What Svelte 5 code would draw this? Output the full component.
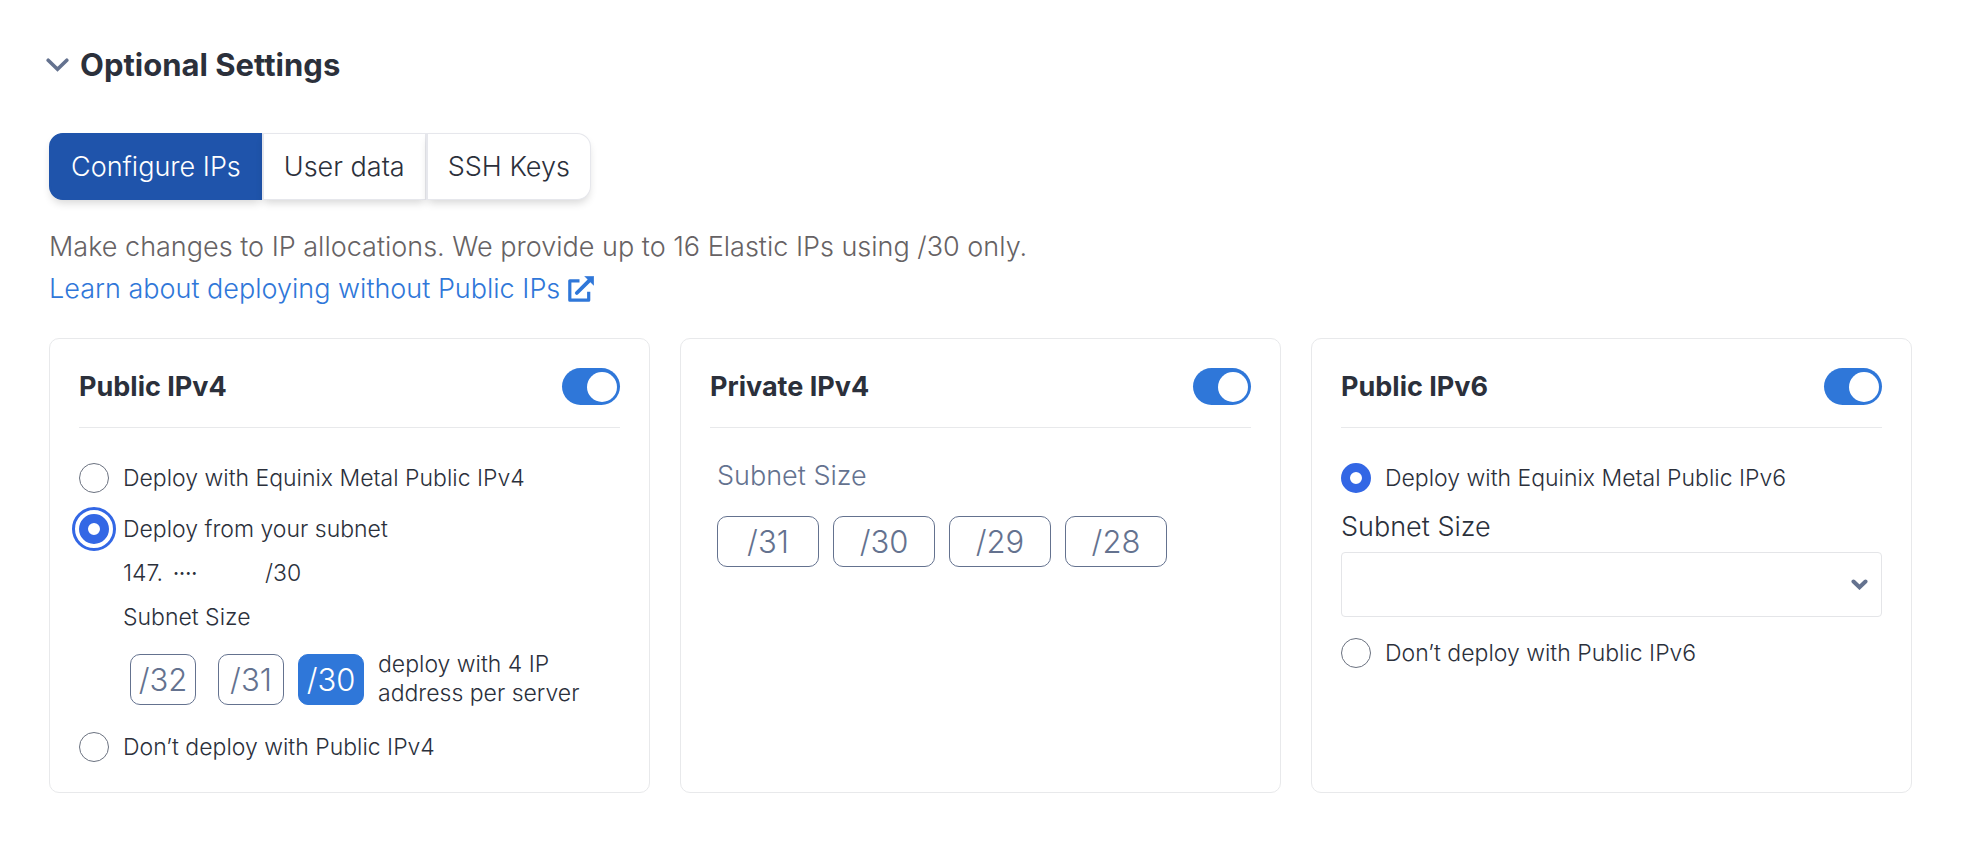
<script>
  const tabs = ['Configure IPs', 'User data', 'SSH Keys'];
  const v4Sizes = ['/32', '/31', '/30'];
  const privateSizes = ['/31', '/30', '/29', '/28'];

  let activeTab = $state('Configure IPs');
  let v4Mode = $state('subnet');
  let v6Mode = $state('deploy');
  let v4Size = $state('/30');
  let privateSize = $state('');
  let v4On = $state(true);
  let privateOn = $state(true);
  let v6On = $state(true);
</script>

<main>
  <h2>
    <button class="heading" aria-expanded="true">
      <svg width="23" height="14" viewBox="0 0 23 14" aria-hidden="true">
        <path d="M2.2 2.2 11.5 11.3 20.8 2.2" fill="none" stroke="#64728f" stroke-width="3.6" stroke-linecap="round" />
      </svg>
      Optional Settings
    </button>
  </h2>

  <div class="tabs" role="tablist">
    {#each tabs as tab}
      <button role="tab" class="tab" class:active={tab === activeTab} aria-selected={tab === activeTab} onclick={() => (activeTab = tab)}>{tab}</button>
    {/each}
  </div>

  <p class="intro">Make changes to IP allocations. We provide up to 16 Elastic IPs using /30 only.</p>
  <a class="learn" href="#docs">
    Learn about deploying without Public IPs
    <svg width="26" height="26" viewBox="0 0 26 26" aria-hidden="true">
      <path d="M11.5 4.8H1.8V24.2H20.7V15.8" fill="none" stroke="currentColor" stroke-width="3.2" stroke-linejoin="round" />
      <path d="M8.8 17 21 4.8" fill="none" stroke="currentColor" stroke-width="3.8" stroke-linecap="round" />
      <path d="M16.6 .2H25.8V9.4Z" fill="currentColor" stroke="currentColor" stroke-width=".4" />
    </svg>
  </a>

  <div class="cards">
    <section class="card">
      <header>
        <h3 id="t-v4">Public IPv4</h3>
        <input class="toggle" type="checkbox" role="switch" aria-labelledby="t-v4" bind:checked={v4On} />
      </header>
      <div class="body">
        <label class="option"><input type="radio" name="v4" value="equinix" bind:group={v4Mode} />Deploy with Equinix Metal Public IPv4</label>
        <label class="option next"><input class="ring" type="radio" name="v4" value="subnet" bind:group={v4Mode} />Deploy from your subnet</label>
        <div class="details">
          <div class="line address"><span>147.</span><span class="dots">····</span><span>/30</span></div>
          <div class="line">Subnet Size</div>
          <div class="sizes">
            {#each v4Sizes as size}
              <button class="size" class:selected={size === v4Size} aria-pressed={size === v4Size} onclick={() => (v4Size = size)}>{size}</button>
            {/each}
            <span class="note">deploy with 4 IP<br />address per server</span>
          </div>
        </div>
        <label class="option last"><input type="radio" name="v4" value="none" bind:group={v4Mode} />Don’t deploy with Public IPv4</label>
      </div>
    </section>

    <section class="card">
      <header>
        <h3 id="t-private">Private IPv4</h3>
        <input class="toggle" type="checkbox" role="switch" aria-labelledby="t-private" bind:checked={privateOn} />
      </header>
      <div class="body private">
        <div class="caption">Subnet Size</div>
        <div class="sizes">
          {#each privateSizes as size}
            <button class="size wide" class:selected={size === privateSize} aria-pressed={size === privateSize} onclick={() => (privateSize = size)}>{size}</button>
          {/each}
        </div>
      </div>
    </section>

    <section class="card">
      <header>
        <h3 id="t-v6">Public IPv6</h3>
        <input class="toggle" type="checkbox" role="switch" aria-labelledby="t-v6" bind:checked={v6On} />
      </header>
      <div class="body">
        <label class="option"><input type="radio" name="v6" value="deploy" bind:group={v6Mode} />Deploy with Equinix Metal Public IPv6</label>
        <label class="caption dark" for="v6-size">Subnet Size</label>
        <div class="select">
          <select id="v6-size"><option value=""></option></select>
          <svg width="17" height="11" viewBox="0 0 17 11" aria-hidden="true">
            <path d="M2.5 2.5 8.5 8.3 14.5 2.5" fill="none" stroke="#64728f" stroke-width="4" stroke-linecap="round" />
          </svg>
        </div>
        <label class="option next"><input type="radio" name="v6" value="none" bind:group={v6Mode} />Don’t deploy with Public IPv6</label>
      </div>
    </section>
  </div>
</main>

<style>
  :global(body) {
    margin: 0;
    background: #fff;
  }

  main {
    padding: 45px 54px 53px 49px;
    font-family: Inter, 'Liberation Sans', sans-serif;
    font-weight: 300;
    font-size: 23px;
    color: #2b303b;
  }

  button,
  select {
    font: inherit;
    color: inherit;
  }

  button {
    cursor: pointer;
  }

  h2,
  h3,
  p {
    margin: 0;
  }

  h2 {
    display: flex;
    margin-left: -3px;
  }

  .heading {
    display: flex;
    align-items: center;
    gap: 11px;
    padding: 0;
    border: 0;
    background: none;
    font-size: 31px;
    font-weight: 700;
    line-height: 40px;
  }

  .tabs {
    display: flex;
    margin-top: 48px;
  }

  .tab {
    height: 67px;
    padding: 0 20px;
    border: 1px solid #e6e7ec;
    border-left-width: 2px;
    background: #fff;
    box-shadow: 0 5px 8px -2px rgba(0, 0, 0, 0.16);
    font-size: 27px;
  }

  .tab:first-child {
    border-radius: 14px 0 0 14px;
  }

  .tab:last-child {
    border-radius: 0 14px 14px 0;
  }

  .tab.active {
    border-color: #1f54ab;
    background: #1f54ab;
    color: #fff;
  }

  .intro {
    margin-top: 26px;
    color: #666264;
    font-size: 27px;
    line-height: 42px;
  }

  .learn {
    display: flex;
    align-items: center;
    gap: 8px;
    width: fit-content;
    color: #2f77d9;
    font-size: 27px;
    line-height: 42px;
    text-decoration: none;
  }

  .cards {
    display: grid;
    grid-template-columns: repeat(3, 1fr);
    gap: 30px;
    margin-top: 28px;
  }

  .card {
    padding: 29px 29px 30px;
    border: 1px solid #e8e9eb;
    border-radius: 10px;
  }

  header {
    display: flex;
    align-items: center;
    justify-content: space-between;
    padding-bottom: 22px;
    border-bottom: 1px solid #e8e9eb;
  }

  h3 {
    font-size: 27px;
    font-weight: 700;
    line-height: 36px;
  }

  .toggle {
    appearance: none;
    display: flex;
    align-items: center;
    width: 58px;
    height: 37px;
    margin: 0;
    padding: 0 3px;
    border-radius: 19px;
    background: #aab2c0;
  }

  .toggle::before {
    content: '';
    width: 30px;
    height: 30px;
    border-radius: 50%;
    background: #fff;
  }

  .toggle:checked {
    justify-content: flex-end;
    background: #2f77d9;
  }

  .body {
    padding-top: 35px;
  }

  .body.private {
    padding: 33px 0 0 7px;
  }

  .option {
    display: flex;
    align-items: center;
    gap: 14px;
    line-height: 30px;
  }

  .option.next {
    margin-top: 21px;
  }

  .option.last {
    margin-top: 24px;
  }

  input[type='radio'] {
    appearance: none;
    flex: none;
    width: 30px;
    height: 30px;
    margin: 0;
    border: 1px solid #6b7280;
    border-radius: 50%;
  }

  input[type='radio']:checked {
    border: 9px solid #3367e5;
  }

  input.ring:checked {
    outline: 3px solid #3367e5;
    outline-offset: 4px;
  }

  .details {
    padding: 7px 0 0 44px;
  }

  .line {
    line-height: 44px;
  }

  .address {
    display: grid;
    grid-template-columns: 50px 92px auto;
    justify-content: start;
  }

  .dots {
    font-size: 20px;
    font-weight: 500;
  }

  .sizes {
    display: flex;
    align-items: center;
    gap: 14px;
  }

  .details .sizes {
    padding: 11px 0 0 7px;
  }

  .size {
    width: 66px;
    height: 51px;
    padding: 0;
    border: 1px solid #64728f;
    border-radius: 10px;
    background: #fff;
    color: #64728f;
    font-size: 31px;
  }

  .details .size:first-child {
    margin-right: 8px;
  }

  .size.wide {
    width: 102px;
  }

  .size.selected {
    border-color: #2f77d9;
    background: #2f77d9;
    color: #fff;
  }

  .note {
    line-height: 29px;
  }

  .caption {
    display: block;
    margin-bottom: 25px;
    color: #64728f;
    font-size: 27px;
    line-height: 30px;
  }

  .caption.dark {
    margin: 19px 0 10px;
    color: #2b303b;
  }

  .select {
    display: grid;
    align-items: center;
  }

  .select > * {
    grid-area: 1 / 1;
  }

  .select svg {
    justify-self: end;
    margin-right: 14px;
    pointer-events: none;
  }

  select {
    appearance: none;
    width: 100%;
    height: 65px;
    padding: 0 40px 0 16px;
    border: 1px solid #e4e5e8;
    border-radius: 4px;
    background: #fff;
  }
</style>
